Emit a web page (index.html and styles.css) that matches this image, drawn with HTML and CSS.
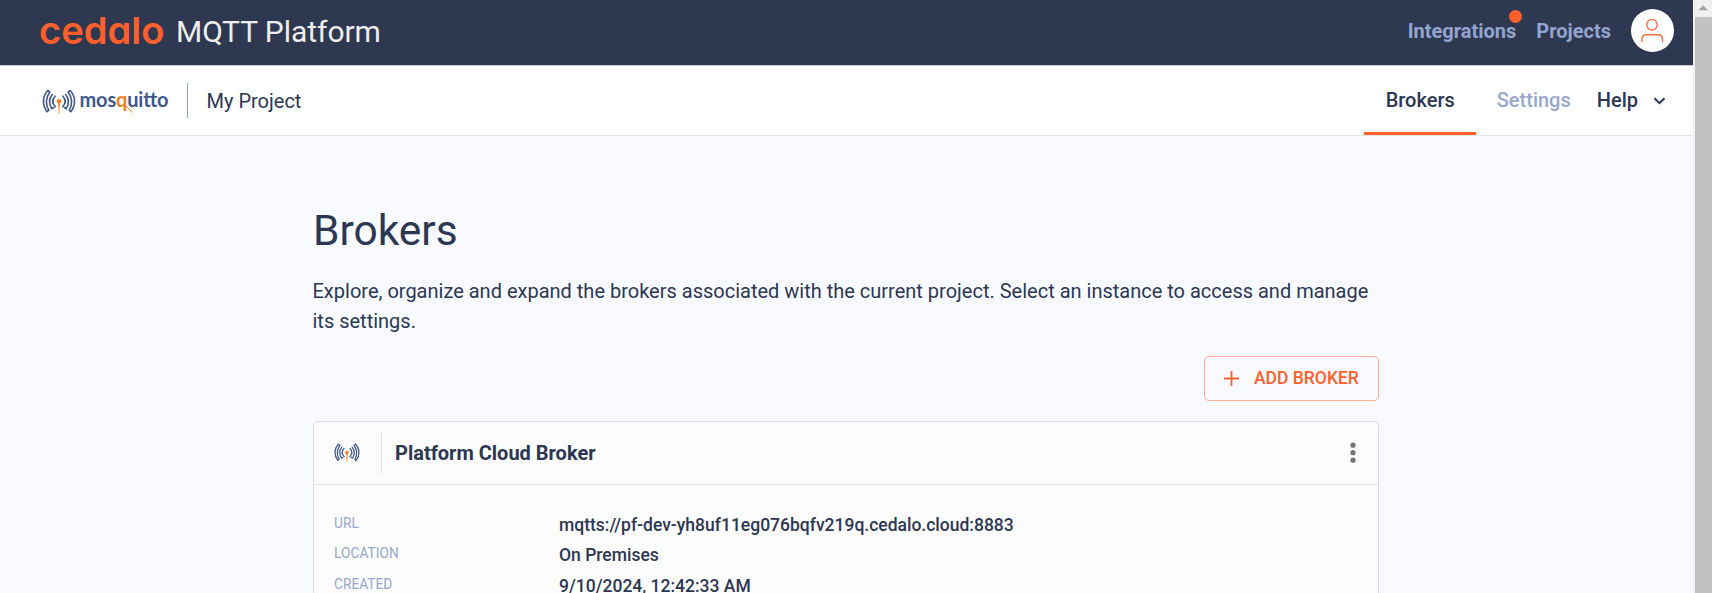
FILE: index.html
```
<!DOCTYPE html>
<html lang="en">
<head>
<meta charset="utf-8">
<title>Cedalo MQTT Platform</title>
<link rel="stylesheet" href="styles.css">
</head>
<body>
<svg width="0" height="0" class="defs" aria-hidden="true">
  <symbol id="waves" viewBox="0 0 33 26">
    <g fill="none" stroke="#40588a" stroke-width="1.600" stroke-linecap="round" stroke-linejoin="round">
      <path d="M7.300 3L5.300 1.500C-.4 7.500-.4 16.500 4.700 22.700L6.300 21.200C2.900 15.500 3.200 9 7.300 3"/>
      <path d="M25.700 3L27.700 1.500C33.400 7.500 33.400 16.500 28.300 22.700L26.700 21.200C30.100 15.500 29.800 9 25.700 3"/>
      <path d="M9.800 5.500C6.300 10 6.300 15 9.300 19.700L11.200 18.500M23.200 5.500C26.700 10 26.700 15 23.700 19.700L21.800 18.500"/>
      <path d="M12.600 7.200C9.600 10.500 9.700 14.500 12.900 17.700M20.400 7.200C23.400 10.500 23.300 14.500 20.100 17.700"/>
    </g>
    <circle cx="16.500" cy="12.300" r="2.300" fill="#f58025"/>
    <path d="M15.500 12h2l-.7 13h-.6z" fill="#f58025"/>
  </symbol>
</svg>
<div class="window">
  <div class="page">
    <header class="topbar">
      <svg class="cedalo" width="125" height="40" viewBox="0 0 125 40"><text x="0" y="34.500" textLength="125.500" lengthAdjust="spacingAndGlyphs">cedalo</text></svg>
      <span class="product">MQTT Platform</span>
      <nav class="toplinks">
        <a class="integrations">Integrations<i class="dot"></i></a>
        <a class="projects">Projects</a>
        <span class="avatar"><svg width="43" height="43" viewBox="0 0 43 43"><g fill="none" stroke="#ff7043" stroke-width="1.400" stroke-linecap="round"><circle cx="21" cy="15.700" r="5.300"/><path d="M11 32.500v-2c0-3 2-4.700 4.500-4.700h11.500c2.500 0 4.500 1.700 4.500 4.700v2"/></g></svg></span>
      </nav>
    </header>
    <div class="subbar">
      <svg class="mosquitto" width="128" height="30" viewBox="0 0 128 30">
        <use href="#waves" x="0" y="3" width="34" height="26"/>
        <text x="37.500" y="21" textLength="89" lengthAdjust="spacing">mos<tspan class="q">q</tspan>uitto</text>
        <path d="M84 20l6.500 6.500" stroke="#f58025" stroke-width="1"/>
      </svg>
      <span class="rule"></span>
      <span class="project">My Project</span>
      <nav class="tabs">
        <a class="tab active">Brokers</a>
        <a class="tab muted">Settings</a>
        <a class="tab help">Help</a>
        <svg class="chev" width="13" height="8" viewBox="0 0 13 8"><path d="M1.500 1.200l5 5 5-5" fill="none" stroke="#2d3752" stroke-width="2"/></svg>
      </nav>
    </div>
    <main class="content">
      <h1>Brokers</h1>
      <p class="intro">Explore, organize and expand the brokers associated with the current project. Select an instance to access and manage<br>its settings.</p>
      <div class="actions">
        <button class="add"><svg width="15" height="15" viewBox="0 0 15 15"><path d="M7.500 0v15M0 7.500h15" stroke="#ff5f2d" stroke-width="1.800"/></svg><span>ADD BROKER</span></button>
      </div>
      <section class="card">
        <div class="card-head">
          <span class="card-icon"><svg width="26" height="20"><use href="#waves" width="26" height="20"/></svg></span>
          <h2>Platform Cloud Broker</h2>
          <svg class="more" width="6" height="22" viewBox="0 0 6 22"><g fill="#757575"><circle cx="3" cy="3.200" r="2.600"/><circle cx="3" cy="10.700" r="2.600"/><circle cx="3" cy="18.200" r="2.600"/></g></svg>
        </div>
        <dl class="details">
          <dt>URL</dt><dd>mqtts://pf-dev-yh8uf11eg076bqfv219q.cedalo.cloud:8883</dd>
          <dt>LOCATION</dt><dd>On Premises</dd>
          <dt>CREATED</dt><dd>9/10/2024, 12:42:33 AM</dd>
        </dl>
      </section>
    </main>
  </div>
  <div class="scrollbar"><svg width="17" height="17" viewBox="0 0 17 17"><path d="M3.500 10.300L8.200 5.200l4.700 5.100z" fill="#a3a3a3"/></svg><div class="thumb"></div></div>
</div>
</body>
</html>
```
FILE: styles.css
```
* { box-sizing: border-box; }
body { margin: 0; height: 593px; overflow: hidden; font-family: Roboto, sans-serif; color: #2d3752; background: #f8faff; }
.defs { position: absolute; }
.window { display: flex; height: 593px; overflow: hidden; }
.page { width: 1693px; flex: none; }
.topbar { display: flex; align-items: center; height: 66px; padding: 0 19px 0 39px; background: #2e3850; border-bottom: 1px solid #c8ccd0; }
.cedalo { flex: none; margin-top: -8px; overflow: visible; }
.cedalo text { font: 600 37.500px Inter, sans-serif; font-feature-settings: "cv11" 1; fill: #ff5f2d; }
.product { margin: -2px 0 0 12px; font-size: 30px; line-height: 40px; color: #eeeeee; letter-spacing: -0.05px; }
.toplinks { display: flex; align-items: center; margin: -4px 0 0 auto; font-size: 20px; font-weight: 700; line-height: 30px; color: #93a5cf; }
.integrations { position: relative; margin-right: 20px; }
.dot { position: absolute; top: -6px; right: -6px; width: 13px; height: 13px; border-radius: 50%; background: #ff5f2d; }
.projects { margin-right: 20px; }
.avatar { width: 43px; height: 43px; border-radius: 50%; background: #fff; }
.avatar svg { display: block; }
.subbar { display: flex; align-items: center; height: 70px; padding: 0 27px 0 42px; background: #fff; border-bottom: 1px solid #e1e4e8; }
.mosquitto { flex: none; overflow: visible; }
.mosquitto text { font: 700 20px Lato, sans-serif; fill: #40588a; }
.mosquitto .q { fill: #f58025; }
.rule { width: 1px; height: 35px; margin-left: 17px; background: #98a3c3; }
.project { margin-left: 18.500px; font-size: 20px; }
.tabs { display: flex; align-items: center; align-self: stretch; margin-left: auto; font-size: 20px; font-weight: 500; }
.tab { display: flex; align-items: center; height: 69px; padding-bottom: 1px; }
.tab.active { width: 112px; justify-content: center; padding: 3px 0 1px; border-bottom: 3px solid #ff5f2d; }
.muted { margin-left: 20.500px; color: #99a7ca; }
.help { margin-left: 26px; }
.chev { margin-left: 15px; }
.content { width: 1066px; margin-left: 313px; }
h1 { margin: 0; padding-top: 69px; font-size: 42.500px; font-weight: 400; line-height: 52px; }
.intro { margin: 19px 0 0 -0.500px; font-size: 20px; line-height: 30px; white-space: nowrap; }
.actions { display: flex; justify-content: flex-end; margin-top: 20px; }
.add { display: flex; align-items: center; width: 175px; height: 45px; padding: 0 0 0 19px; gap: 15px; background: transparent; border: 1px solid #ffab91; border-radius: 5px; color: #ff5f2d; font: 500 17.500px Roboto, sans-serif; white-space: nowrap; }
.add span { padding-bottom: 2px; }
.card { height: 300px; margin-top: 20px; background: #fcfcfc; border: 1px solid #d9dbdd; border-radius: 5px; }
.card-head { display: flex; align-items: center; height: 63px; border-bottom: 1px solid #e1e4e8; }
.card-icon { display: flex; align-items: center; width: 68px; height: 42px; padding-left: 20px; border-right: 1px solid #e1e4e8; }
h2 { margin: 0 auto 0 13px; font-size: 20px; font-weight: 700; }
.more { margin-right: 22px; }
.details { display: grid; grid-template-columns: 225px 1fr; grid-auto-rows: 30.300px; margin: 0; padding: 24px 0 0 20px; line-height: 30px; }
dt { margin-top: -1px; font-size: 13.750px; color: #99a7ca; }
dd { margin: 1px 0 0; font-size: 17.500px; font-weight: 500; }
.scrollbar { width: 19px; padding-left: 2px; background: #f1f1f1; }
.scrollbar svg { display: block; }
.thumb { height: 576px; background: #c1c1c1; }
```
